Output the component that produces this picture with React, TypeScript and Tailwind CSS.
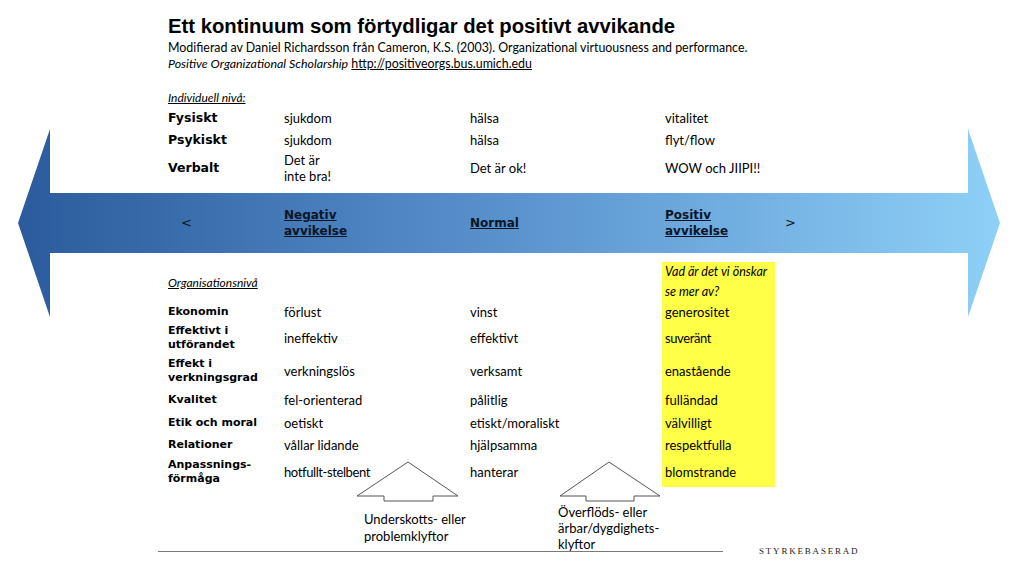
const label = "font-['DejaVu_Sans',sans-serif] font-bold text-[12.5px] leading-[16px] text-black";
const orgLabel = "font-['DejaVu_Sans',sans-serif] font-bold text-[11px] leading-[14px] text-black";
const body = "font-['Lato',sans-serif] text-[13px] leading-[16px] text-black";
const arrowLabel = "font-['DejaVu_Sans',sans-serif] font-bold text-[12px] leading-[16px] underline text-[#0b1526]";

const ORG_ROWS = [
  { h: "h-[21px]", name: ["Ekonomin"], neg: "förlust", norm: "vinst", pos: "generositet" },
  { h: "h-[32px]", name: ["Effektivt i", "utförandet"], neg: "ineffektiv", norm: "effektivt", pos: "suveränt" },
  { h: "h-[34px]", name: ["Effekt i", "verkningsgrad"], neg: "verkningslös", norm: "verksamt", pos: "enastående" },
  { h: "h-[23px]", name: ["Kvalitet"], neg: "fel-orienterad", norm: "pålitlig", pos: "fulländad" },
  { h: "h-[23px]", name: ["Etik och moral"], neg: "oetiskt", norm: "etiskt/moraliskt", pos: "välvilligt" },
  { h: "h-[22px]", name: ["Relationer"], neg: "vållar lidande", norm: "hjälpsamma", pos: "respektfulla" },
  { h: "h-[31px]", name: ["Anpassnings-", "förmåga"], neg: "hotfullt-stelbent", norm: "hanterar", pos: "blomstrande" },
];

const GRID = "grid grid-cols-[116px_186px_192px_113px_40px] items-center";

function Arrow() {
  return (
    <svg className="absolute inset-0 pointer-events-none" width="1024" height="576" viewBox="0 0 1024 576">
      <defs>
        <linearGradient id="shaft" x1="18" y1="0" x2="1000" y2="0" gradientUnits="userSpaceOnUse">
          <stop offset="0" stopColor="#2b5b9c" />
          <stop offset="0.5" stopColor="#5a92ce" />
          <stop offset="1" stopColor="#8ed0f7" />
        </linearGradient>
      </defs>
      <polygon
        points="18,223 50,129 50,193 968,193 968,129 1000,223 968,317 968,253 50,253 50,317"
        fill="url(#shaft)"
      />
    </svg>
  );
}

function Gaps() {
  return (
    <svg className="absolute inset-0 pointer-events-none" width="1024" height="576" viewBox="0 0 1024 576">
      <polygon points="357,496 408,462 458,496 433,496 433,501 384,501 384,496" fill="none" stroke="#555" strokeWidth="1" />
      <polygon points="560,496 609,462 660,496 634,496 634,501 586,501 586,496" fill="none" stroke="#555" strokeWidth="1" />
    </svg>
  );
}

export default function App() {
  return (
    <div className="relative w-[1024px] h-[576px] bg-white overflow-hidden">
      <Arrow />
      <div className="relative pl-[168px]">
        {/* Heading */}
        <div className="pt-[13px]">
          <h1 className="font-['Liberation_Sans',sans-serif] font-bold text-[20.3px] leading-[26px] text-black">
            Ett kontinuum som förtydligar det positivt avvikande
          </h1>
          <p className="mt-[1px] font-['Lato',sans-serif] text-[12.4px] leading-[16px] text-black">
            Modifierad av Daniel Richardsson från Cameron, K.S. (2003). Organizational virtuousness and performance.
          </p>
          <p className="font-['Lato',sans-serif] text-[12.4px] leading-[16px] text-black">
            <span className="italic">Positive Organizational Scholarship</span>{" "}
            <span className="underline">http://positiveorgs.bus.umich.edu</span>
          </p>
        </div>

        {/* Individual level */}
        <div className="mt-[18px] h-[16px] flex items-center">
          <span className="font-['Lato',sans-serif] italic underline text-[12px] text-black">Individuell nivå:</span>
        </div>
        <div className={`${GRID} mt-[2px] h-[20px]`}>
          <span className={label}>Fysiskt</span>
          <span className={body}>sjukdom</span>
          <span className={body}>hälsa</span>
          <span className={`${body} pl-[3px]`}>vitalitet</span>
        </div>
        <div className={`${GRID} mt-[2px] h-[20px]`}>
          <span className={label}>Psykiskt</span>
          <span className={body}>sjukdom</span>
          <span className={body}>hälsa</span>
          <span className={`${body} pl-[3px]`}>flyt/flow</span>
        </div>
        <div className={`${GRID} mt-[2px] h-[30px]`}>
          <span className={label}>Verbalt</span>
          <span className={body}>Det är<br />inte bra!</span>
          <span className={body}>Det är ok!</span>
          <span className={`${body} pl-[3px]`}>WOW och JIIPI!!</span>
        </div>

        {/* Arrow labels */}
        <div className={`${GRID} mt-[11px] h-[60px]`}>
          <span className="pl-[13px] font-['DejaVu_Sans',sans-serif] text-[13px] text-[#0b1526]">&lt;</span>
          <span className={arrowLabel}>Negativ<br />avvikelse</span>
          <span className={arrowLabel}>Normal</span>
          <span className={`${arrowLabel} pl-[3px]`}>Positiv<br />avvikelse</span>
          <span className="pl-[10px] font-['DejaVu_Sans',sans-serif] text-[13px] text-[#0b1526]">&gt;</span>
        </div>

        {/* Organisational level */}
        <div className={`${GRID} mt-[9px] h-[39px] items-stretch`}>
          <span className="flex items-center pt-[1px] font-['Lato',sans-serif] italic underline text-[12px] text-black col-span-3">
            Organisationsnivå
          </span>
          <span className="bg-[#ffff47] pl-[3px] font-['Lato',sans-serif] italic text-[12.5px] leading-[20px] text-black">
            Vad är det vi önskar<br />se mer av?
          </span>
        </div>
        {ORG_ROWS.map((r) => (
          <div key={r.pos} className={`${GRID} ${r.h} items-stretch`}>
            <span className={`${orgLabel} flex flex-col justify-center`}>
              {r.name.map((n) => (
                <span key={n}>{n}</span>
              ))}
            </span>
            <span className={`${body} flex items-center ${r.neg === "hotfullt-stelbent" ? "tracking-[-0.4px]" : ""}`}>{r.neg}</span>
            <span className={`${body} flex items-center`}>{r.norm}</span>
            <span className={`${body} flex items-center bg-[#ffff47] pl-[3px] ${r.pos === "suveränt" ? "tracking-[-0.4px]" : ""}`}>{r.pos}</span>
          </div>
        ))}

        {/* Gap labels */}
        <div className="h-[64px] flex">
          <p className={`${body} ml-[196px] w-[194px] mt-[24px] leading-[17px]`}>
            Underskotts- eller<br />problemklyftor
          </p>
          <p className={`${body} mt-[17px] leading-[16.5px]`}>
            Överflöds- eller<br />ärbar/dygdighets-<br />klyftor
          </p>
        </div>

        {/* Footer rule */}
        <div className="-ml-[10px] flex items-center h-[1px]">
          <div className="w-[565px] h-px bg-[#7a7a7a]" />
          <span className="ml-[36px] font-['Liberation_Serif',serif] text-[9px] tracking-[0.2em] text-[#222]">
            STYRKEBASERAD
          </span>
        </div>
      </div>
      <Gaps />
    </div>
  );
}
